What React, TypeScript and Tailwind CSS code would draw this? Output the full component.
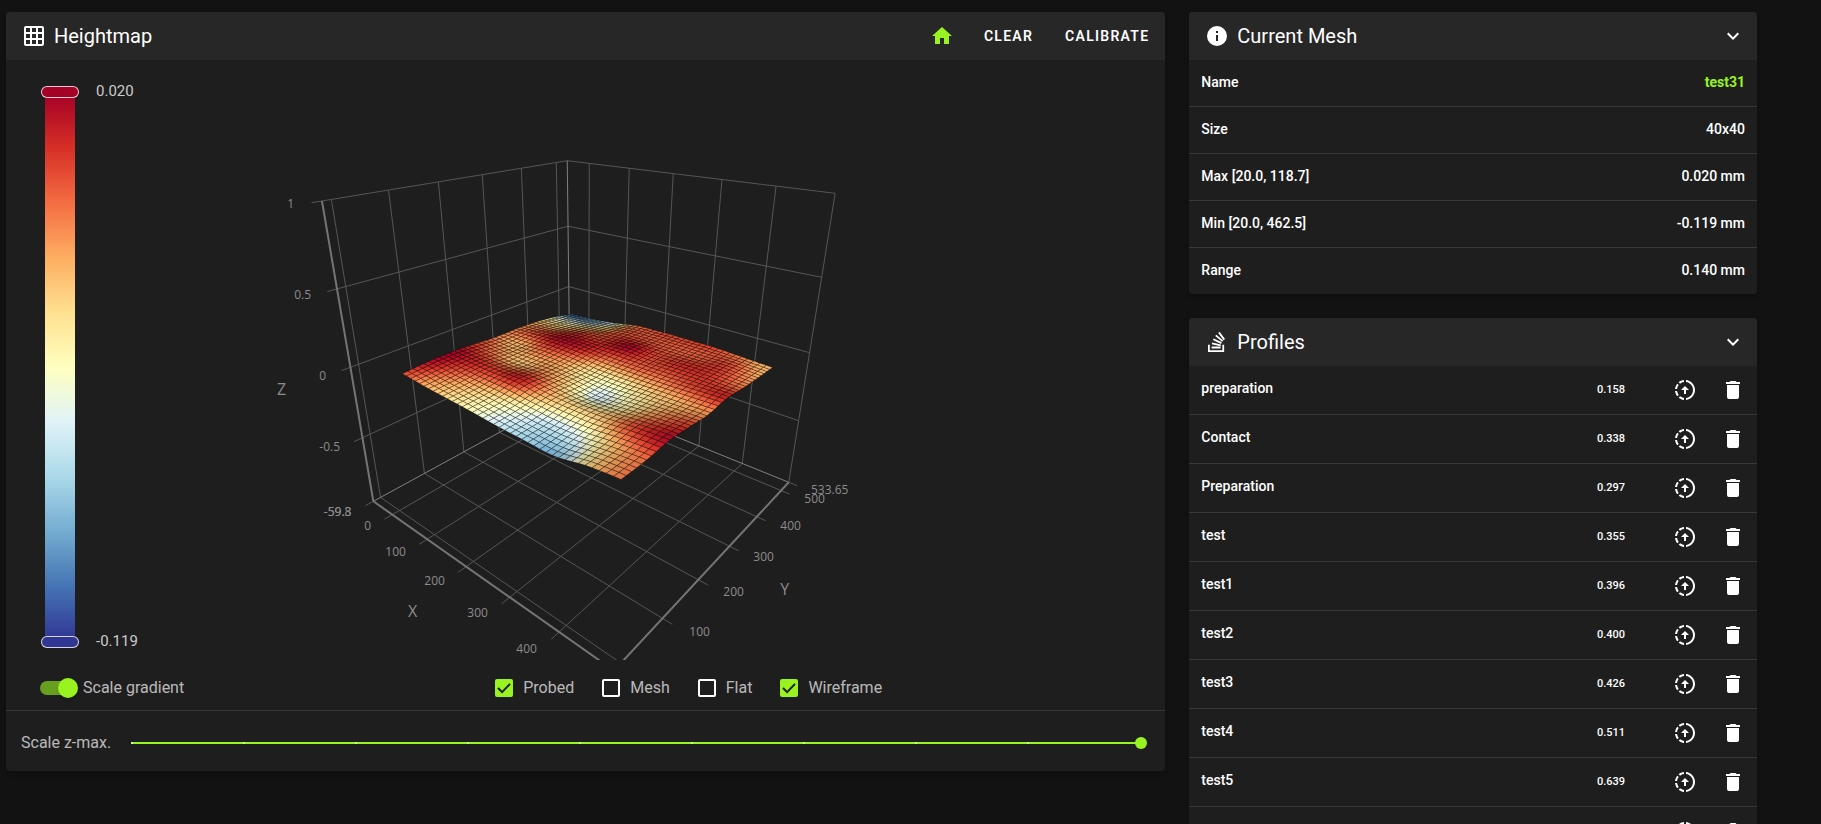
import React, { useMemo, useState } from "react";
import { clsx } from "clsx";

const icons = {
  grid: "M10,4V8H14V4H10M16,4V8H20V4H16M16,10V14H20V10H16M16,16V20H20V16H16M14,20V16H10V20H14M8,20V16H4V20H8M8,14V10H4V14H8M8,8V4H4V8H8M10,14H14V10H10V14M4,2H20A2,2 0 0,1 22,4V20A2,2 0 0,1 20,22H4C2.92,22 2,21.1 2,20V4A2,2 0 0,1 4,2Z",
  home: "M10,20V14H14V20H19V12H22L12,3L2,12H5V20H10Z",
  info: "M13,9H11V7H13M13,17H11V11H13M12,2A10,10 0 0,0 2,12A10,10 0 0,0 12,22A10,10 0 0,0 22,12A10,10 0 0,0 12,2Z",
  stack: "M17.36,20.2V14.82H19.15V22H3V14.82H4.8V20.2H17.36M6.77,14.32L7.14,12.56L15.93,14.41L15.56,16.17L6.77,14.32M7.93,10.11L8.69,8.5L16.83,12.28L16.07,13.9L7.93,10.11M10.19,6.12L11.34,4.74L18.24,10.5L17.09,11.87L10.19,6.12M14.64,1.87L20,9.08L18.56,10.15L13.2,2.94L14.64,1.87M6.59,18.41V16.61H15.57V18.41H6.59Z",
  chevron: "M7.41,8.58L12,13.17L16.59,8.58L18,10L12,16L6,10L7.41,8.58Z",
  upload: "M13,2.03V2.05L13,4.05C17.39,4.59 20.5,8.58 19.96,12.97C19.5,16.61 16.64,19.5 13,19.93V21.93C18.5,21.38 22.5,16.5 21.95,11C21.5,6.25 17.73,2.5 13,2.03M11,2.06C9.05,2.25 7.19,3 5.67,4.26L7.1,5.74C8.22,4.84 9.57,4.26 11,4.06V2.06M4.26,5.67C3,7.19 2.25,9.04 2.05,11H4.05C4.24,9.58 4.8,8.23 5.69,7.1L4.26,5.67M2.06,13C2.26,14.96 3.03,16.81 4.27,18.33L5.69,16.9C4.81,15.77 4.24,14.42 4.06,13H2.06M7.1,18.37L5.67,19.74C7.18,21 9.04,21.79 11,22V20C9.58,19.82 8.23,19.25 7.1,18.37M12,8L8,12H11V16H13V12H16L12,8Z",
  trash: "M19,4H15.5L14.5,3H9.5L8.5,4H5V6H19M6,19A2,2 0 0,0 8,21H16A2,2 0 0,0 18,19V7H6V19Z",
  check: "M4,12 L9.5,17.5 L20,6.5",
};

function Icon({ name, className }: { name: keyof typeof icons; className?: string }) {
  return (
    <svg viewBox="0 0 24 24" className={clsx("size-6 shrink-0 fill-current", className)} aria-hidden="true">
      <path d={icons[name]} />
    </svg>
  );
}

/* ---------- 3D surface ---------- */

type Vec = [number, number, number];

// Homogeneous camera: screen = origin + u*AX + v*AY + w*AZ
const ORIGIN: Vec = [373.7, 501.3, 1];
const AX: Vec = [70, -16.9, -0.2777];
const AY: Vec = [380.4, 19.3, 0.322];
const AZ: Vec = [-114.1, -339.4, -0.1945];

const toU = (x: number) => (x + 59) / 557;
const toV = (y: number) => (y + 15.3) / 549.3;
const toW = (z: number) => (z + 1) / 2;

function project(u: number, v: number, w: number): [number, number] {
  const p = [0, 1, 2].map((i) => ORIGIN[i] + u * AX[i] + v * AY[i] + w * AZ[i]);
  return [p[0] / p[2], p[1] / p[2]];
}

const palette: Vec[] = [
  [49, 54, 149], [69, 117, 180], [116, 173, 209], [171, 217, 233], [224, 243, 248], [255, 255, 191],
  [254, 224, 144], [253, 174, 97], [244, 109, 67], [215, 48, 39], [165, 0, 38],
];

// Probed heights normalised to 0..1, rows follow X, columns follow Y
const probed = [
  [0.85, 0.97, 0.99, 0.88, 0.76, 0.76, 0.66, 0.44, 0.06],
  [0.7, 0.82, 0.92, 0.76, 0.68, 0.86, 0.68, 0.44, 0.16],
  [0.6, 0.7, 0.88, 0.66, 0.78, 0.97, 0.86, 0.6, 0.4],
  [0.5, 0.6, 0.92, 0.74, 0.72, 0.92, 0.88, 0.82, 0.76],
  [0.36, 0.48, 0.7, 0.62, 0.58, 0.8, 0.98, 0.84, 0.84],
  [0.28, 0.36, 0.62, 0.4, 0.54, 0.8, 0.86, 0.82, 0.86],
  [0.22, 0.42, 0.66, 0.54, 0.62, 0.8, 0.9, 0.82, 0.86],
  [0.6, 0.66, 0.86, 0.74, 0.68, 0.86, 0.88, 0.86, 0.76],
  [0.78, 0.8, 0.97, 0.88, 0.74, 0.92, 0.78, 0.7, 0.66],
];

function cubic(a: number, b: number, c: number, d: number, t: number) {
  return b + 0.5 * t * (c - a + t * (2 * a - 5 * b + 4 * c - d + t * (3 * (b - c) + d - a)));
}

function heightAt(s: number, t: number) {
  const last = probed.length - 1;
  const clamp = (i: number) => Math.max(0, Math.min(last, i));
  const i = Math.min(last - 1, Math.floor(s * last));
  const j = Math.min(last - 1, Math.floor(t * last));
  const rows = [-1, 0, 1, 2].map((o) => {
    const r = probed[clamp(i + o)];
    return cubic(r[clamp(j - 1)], r[j], r[j + 1], r[clamp(j + 2)], t * last - j);
  });
  return Math.max(0, Math.min(1, cubic(rows[0], rows[1], rows[2], rows[3], s * last - i)));
}

function colorFor(p: number, shade: number) {
  const k = Math.min(0.9999, Math.max(0, p)) * (palette.length - 1);
  const i = Math.floor(k);
  const c = palette[i].map((a, n) => Math.round((a + (palette[i + 1][n] - a) * (k - i)) * shade));
  return `rgb(${c.join(",")})`;
}

const CELLS = 39;

function buildSurface() {
  const node = (i: number, j: number) => {
    const s = i / CELLS;
    const t = j / CELLS;
    const z = -0.045 + 0.09 * (heightAt(s, t) - 0.5);
    return project(toU(20 + 448 * s), toV(30 + 424 * t), toW(z));
  };
  const quads: { points: string; fill: string }[] = [];
  for (let j = CELLS - 1; j >= 0; j--) {
    for (let i = 0; i < CELLS; i++) {
      const pts = [node(i, j), node(i + 1, j), node(i + 1, j + 1), node(i, j + 1)];
      const s = (i + 0.5) / CELLS;
      const t = (j + 0.5) / CELLS;
      const e = 0.012;
      const slope = (heightAt(s + e, t) - heightAt(s - e, t) - heightAt(s, t + e) + heightAt(s, t - e)) / (2 * e);
      const shade = Math.max(0.8, Math.min(1, 0.94 - 0.05 * slope));
      quads.push({
        points: pts.map((p) => `${p[0].toFixed(1)},${p[1].toFixed(1)}`).join(" "),
        fill: colorFor(heightAt(s, t), shade),
      });
    }
  }
  return quads;
}

const xTicks = [0, 100, 200, 300, 400];
const yTicks = [0, 100, 200, 300, 400, 500];
const zTicks = [-0.5, 0, 0.5, 1];

function line(a: Vec, b: Vec) {
  const [p, q] = [project(...a), project(...b)];
  return `M${p[0].toFixed(1)},${p[1].toFixed(1)}L${q[0].toFixed(1)},${q[1].toFixed(1)}`;
}

const gridPath = [
  ...xTicks.flatMap((x) => [line([toU(x), -0.03, 0], [toU(x), 1, 0]), line([toU(x), 1, 0], [toU(x), 1, 1])]),
  ...yTicks.flatMap((y) => [line([0, toV(y), 0], [1.03, toV(y), 0]), line([0, toV(y), 0], [0, toV(y), 1])]),
  ...zTicks.flatMap((z) => [line([0, -0.03, toW(z)], [0, 1, toW(z)]), line([0, 1, toW(z)], [1, 1, toW(z)])]),
  line([1, 1, 0], [1, 1, 1]),
  line([0, 0, 0], [0, -0.03, 0]),
  line([1, 1, 0], [1.03, 1, 0]),
].join("");

const edgePath = [
  line([0, 0, 0], [0, 1, 0]),
  line([0, 1, 0], [1, 1, 0]),
  line([0, 1, 0], [0, 1, 1]),
].join("");

const axisPath = [
  line([0, 0, 0], [0, 0, 1]),
  line([0, 0, 0], [1, 0, 0]),
  line([1, 0, 0], [1, 1, 0]),
].join("");

const axisLabels: [string, number, number][] = [
  ["1", 291, 203], ["0.5", 303, 294], ["0", 323, 375], ["-0.5", 330, 446], ["-59.3", 338, 511], ["-59.8", 338, 511],
  ["0", 368, 525], ["100", 396, 551], ["200", 435, 580], ["300", 478, 612], ["400", 527, 648],
  ["100", 700, 631], ["200", 734, 591], ["300", 764, 556], ["400", 791, 525], ["500", 815, 498], ["533.65", 830, 489],
];

const axisNames: [string, number, number][] = [["Z", 282, 389], ["X", 413, 611], ["Y", 785, 589]];

function SurfaceChart({ wireframe }: { wireframe: boolean }) {
  const quads = useMemo(buildSurface, []);
  return (
    <svg viewBox="266 60 640 600" className="h-[600px] w-full" role="img" aria-label="Bed mesh surface">
      <path d={gridPath} fill="none" stroke="#565656" strokeWidth="1" />
      <path d={edgePath} fill="none" stroke="#808080" strokeWidth="1" />
      <path d={axisPath} fill="none" stroke="#747474" strokeWidth="2" />
      {quads.map((q, i) => (
        <polygon
          key={i}
          points={q.points}
          fill={q.fill}
          stroke={wireframe ? "rgba(0,0,0,0.32)" : q.fill}
          strokeWidth="1"
        />
      ))}
      <g fill="#8c8c8c" textAnchor="middle" dominantBaseline="central" className="font-['Open_Sans',sans-serif]">
        {axisLabels.map(([text, x, y], i) => (
          <text key={i} x={x} y={y} fontSize="12">{text}</text>
        ))}
        {axisNames.map(([text, x, y]) => (
          <text key={text} x={x} y={y} fontSize="16">{text}</text>
        ))}
      </g>
    </svg>
  );
}

/* ---------- Controls ---------- */

function CheckField({ label, checked, onChange }: { label: string; checked: boolean; onChange: (v: boolean) => void }) {
  return (
    <label className="flex cursor-pointer items-center gap-[10px] text-base text-white/70">
      <span className="relative flex size-[18px]">
        <input
          type="checkbox"
          checked={checked}
          onChange={(e) => onChange(e.target.checked)}
          className="size-[18px] appearance-none rounded-xs border-2 border-white checked:border-[#98f320] checked:bg-[#98f320]"
        />
        {checked && (
          <svg viewBox="0 0 24 24" className="pointer-events-none absolute inset-0 size-[18px]" aria-hidden="true">
            <path d={icons.check} fill="none" stroke="#1e1e1e" strokeWidth="2.7" />
          </svg>
        )}
      </span>
      {label}
    </label>
  );
}

function Card({ title, icon, actions, children }: {
  title: string;
  icon: keyof typeof icons;
  actions: React.ReactNode;
  children: React.ReactNode;
}) {
  return (
    <section className="overflow-hidden rounded bg-[#1e1e1e] shadow-md">
      <header className="flex h-12 items-center bg-[#272727] pl-4">
        <Icon name={icon} />
        <h2 className="ml-2 flex-1 text-xl">{title}</h2>
        {actions}
      </header>
      {children}
    </section>
  );
}

const collapse = (
  <button type="button" aria-label="Collapse" className="mr-3">
    <Icon name="chevron" />
  </button>
);

function HeightmapCard() {
  const [layers, setLayers] = useState({ Probed: true, Mesh: false, Flat: false, Wireframe: true });
  const [scaleGradient, setScaleGradient] = useState(true);
  const [zMax, setZMax] = useState(9);

  return (
    <Card
      title="Heightmap"
      icon="grid"
      actions={
        <>
          <button type="button" aria-label="Home" className="mr-[14px] text-[#98f320]"><Icon name="home" /></button>
          <button type="button" className="px-4 text-sm font-semibold tracking-[0.09em] uppercase">Clear</button>
          <button type="button" className="px-4 text-sm font-semibold tracking-[0.09em] uppercase">Calibrate</button>
        </>
      }
    >
      <div className="grid grid-cols-[136px_1fr_136px]">
        <div className="flex gap-[17px] pt-[26px] pb-3 pl-[35px] text-[15px] text-[#ccc]">
          <div className="flex w-[38px] shrink-0 flex-col items-center">
            <span className="z-10 h-3 w-full rounded-full border border-white/80 bg-[#a50026]" />
            <span className="-my-1 w-[30px] flex-1 bg-[linear-gradient(to_top,#313695,#4575b4,#74add1,#abd9e9,#e0f3f8,#ffffbf,#fee090,#fdae61,#f46d43,#d73027,#a50026)]" />
            <span className="z-10 h-3 w-full rounded-full border border-white/80 bg-[#313695]" />
          </div>
          <div className="flex flex-col justify-between pb-[2px] leading-[10px]">
            <span>0.020</span>
            <span>-0.119</span>
          </div>
        </div>
        <SurfaceChart wireframe={layers.Wireframe} />
      </div>

      <div className="flex h-[50px] items-center pt-[6px]">
        <label className="flex w-[206px] cursor-pointer items-center gap-[5px] pl-[34px] text-base text-white/70">
          <span className="relative flex h-5 w-[38px] items-center">
            <input
              type="checkbox"
              role="switch"
              checked={scaleGradient}
              onChange={(e) => setScaleGradient(e.target.checked)}
              className="peer h-[14px] w-9 appearance-none rounded-full bg-white/30 checked:bg-[#699f20]"
            />
            <span className="pointer-events-none absolute left-0 size-5 rounded-full bg-gray-300 shadow-md peer-checked:left-[18px] peer-checked:bg-[#98f320]" />
          </span>
          Scale gradient
        </label>
        <div className="flex flex-1 justify-center gap-7">
          {(Object.keys(layers) as (keyof typeof layers)[]).map((k) => (
            <CheckField key={k} label={k} checked={layers[k]} onChange={(v) => setLayers({ ...layers, [k]: v })} />
          ))}
        </div>
      </div>

      <div className="flex h-[61px] items-center border-t border-[#393939] px-[15px] pt-1">
        <label htmlFor="zmax" className="mr-[14px] text-base text-white/70">Scale z-max.</label>
        <div className="relative mr-[3px] flex h-5 flex-1 items-center">
          <div className="mx-[6px] flex h-[2px] flex-1 justify-between bg-[#98f320]">
            {Array.from({ length: 10 }, (_, i) => (
              <span key={i} className="h-[2px] w-[2px] bg-white/50" />
            ))}
          </div>
          <input
            id="zmax"
            type="range"
            min={0}
            max={9}
            value={zMax}
            onChange={(e) => setZMax(Number(e.target.value))}
            className="absolute inset-0 w-full appearance-none bg-transparent [&::-webkit-slider-thumb]:size-3 [&::-webkit-slider-thumb]:appearance-none [&::-webkit-slider-thumb]:rounded-full [&::-webkit-slider-thumb]:bg-[#98f320]"
          />
        </div>
      </div>
    </Card>
  );
}

const meshInfo = [
  { label: "Name", value: "test31", accent: true },
  { label: "Size", value: "40x40" },
  { label: "Max [20.0, 118.7]", value: "0.020 mm" },
  { label: "Min [20.0, 462.5]", value: "-0.119 mm" },
  { label: "Range", value: "0.140 mm" },
];

const profiles = [
  { name: "preparation", range: "0.158" },
  { name: "Contact", range: "0.338" },
  { name: "Preparation", range: "0.297" },
  { name: "test", range: "0.355" },
  { name: "test1", range: "0.396" },
  { name: "test2", range: "0.400" },
  { name: "test3", range: "0.426" },
  { name: "test4", range: "0.511" },
  { name: "test5", range: "0.639" },
  { name: "", range: "" },
];

export default function App() {
  return (
    <main className="h-screen overflow-hidden bg-[#121212] pt-3 pr-16 pl-[6px] font-[Roboto,sans-serif] text-white">
      <div className="grid grid-cols-12 items-start gap-6">
        <div className="col-span-8">
          <HeightmapCard />
        </div>
        <div className="col-span-4 flex flex-col gap-6">
          <Card title="Current Mesh" icon="info" actions={collapse}>
            <dl className="divide-y divide-[#393939] text-sm font-medium">
              {meshInfo.map((row) => (
                <div key={row.label} className="flex items-center justify-between px-3 pt-3 pb-[14px]">
                  <dt>{row.label}</dt>
                  <dd className={clsx(row.accent && "font-bold text-[#98f320]")}>{row.value}</dd>
                </div>
              ))}
            </dl>
          </Card>
          <Card title="Profiles" icon="stack" actions={collapse}>
            <ul className="divide-y divide-[#393939]">
              {profiles.map((p) => (
                <li key={p.name} className="flex h-[49px] items-center px-3">
                  <span className="flex-1 pb-1 text-sm font-medium">{p.name}</span>
                  <span className="mr-12 text-[11px] font-medium">{p.range}</span>
                  <button type="button" aria-label={`Load ${p.name}`} className="mr-6"><Icon name="upload" /></button>
                  <button type="button" aria-label={`Delete ${p.name}`}><Icon name="trash" /></button>
                </li>
              ))}
            </ul>
          </Card>
        </div>
      </div>
    </main>
  );
}
